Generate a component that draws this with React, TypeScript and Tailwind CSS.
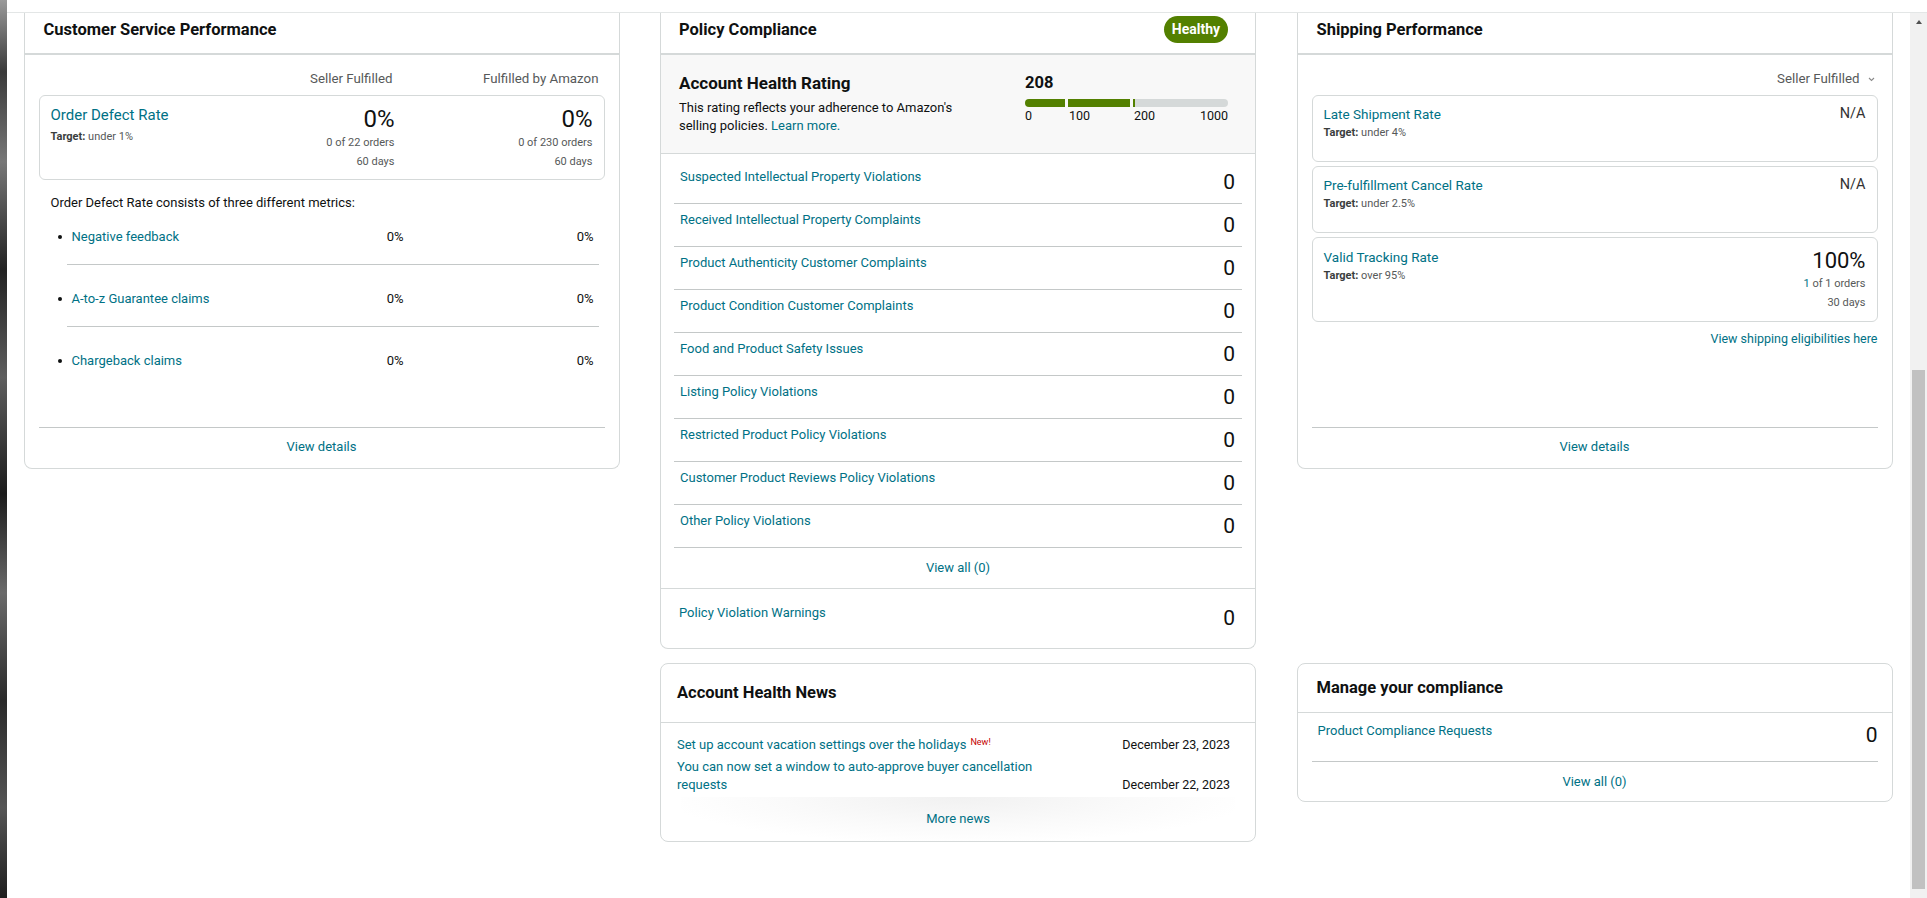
import React from "react";

const policyRows = [
  "Suspected Intellectual Property Violations",
  "Received Intellectual Property Complaints",
  "Product Authenticity Customer Complaints",
  "Product Condition Customer Complaints",
  "Food and Product Safety Issues",
  "Listing Policy Violations",
  "Restricted Product Policy Violations",
  "Customer Product Reviews Policy Violations",
  "Other Policy Violations",
];

const odrMetrics = [
  { label: "Negative feedback", row: "pb-[19px]" },
  { label: "A-to-z Guarantee claims", row: "pt-[26px] pb-[19px]" },
  { label: "Chargeback claims", row: "pt-[26px] pb-[58px]" },
];

function CardTitle({ children }: { children: React.ReactNode }) {
  return <h2 className="text-[16.5px] font-bold leading-[20px] text-[#0f1111]">{children}</h2>;
}

function CustomerServiceCard() {
  return (
    <section className="rounded-b-[8px] border-x border-b border-[#d5d9d9] bg-white">
      <div className="border-b-2 border-[#d5d9d9] pb-[13px] pl-[19px] pt-[7px]">
        <CardTitle>Customer Service Performance</CardTitle>
      </div>
      <div className="px-[14px]">
        <div className="flex pt-[16px] text-[13.3px] leading-[16px] text-[#565959]">
          <div className="flex-1" />
          <div className="text-right">Seller Fulfilled</div>
          <div className="w-[212px] pr-[6px] text-right">Fulfilled by Amazon</div>
        </div>

        <div className="mt-[8px] flex rounded-[6px] border border-[#d5d9d9] pb-[8px] pl-[11px] pr-[11px] pt-[9px]">
          <div className="flex-1 pt-[1px]">
            <a className="block text-[15px] leading-[18px] text-[#007185]">Order Defect Rate</a>
            <p className="mt-[5px] text-[11px] leading-[16px] text-[#565959]">
              <b className="font-bold text-[#3a3d3d]">Target:</b> under 1%
            </p>
          </div>
          <div className="text-right">
            <div className="text-[24px] leading-[28px] text-[#0f1111]">0%</div>
            <div className="text-[11px] leading-[19px] text-[#565959]">0 of 22 orders</div>
            <div className="text-[11px] leading-[19px] text-[#565959]">60 days</div>
          </div>
          <div className="w-[198px] text-right">
            <div className="text-[24px] leading-[28px] text-[#0f1111]">0%</div>
            <div className="text-[11px] leading-[19px] text-[#565959]">0 of 230 orders</div>
            <div className="text-[11px] leading-[19px] text-[#565959]">60 days</div>
          </div>
        </div>

        <p className="mt-[14px] pl-[12px] text-[13px] leading-[18px] text-[#0f1111]">
          Order Defect Rate consists of three different metrics:
        </p>

        <div className="mt-[17px]">
          {odrMetrics.map((m, i) => (
            <React.Fragment key={m.label}>
              {i > 0 && <div className="ml-[28px] mr-[6px] h-px bg-[#c4c8c8]" />}
              <div className={`flex items-center pl-[19px] pr-[11px] text-[13px] leading-[16px] ${m.row}`}>
                <span className="h-[4px] w-[4px] rounded-full bg-[#0f1111]" />
                <a className="ml-[10px] flex-1 text-[#007185]">{m.label}</a>
                <span className="text-[#0f1111]">0%</span>
                <span className="w-[190px] text-right text-[#0f1111]">0%</span>
              </div>
            </React.Fragment>
          ))}
        </div>

        <div className="h-px bg-[#c4c8c8]" />
        <div className="pb-[13px] pt-[11px] text-center text-[13px] leading-[16px] text-[#007185]">View details</div>
      </div>
    </section>
  );
}

function PolicyComplianceCard() {
  return (
    <section className="rounded-b-[8px] border-x border-b border-[#d5d9d9] bg-white">
      <div className="flex items-start justify-between border-b-2 border-[#d5d9d9] pl-[18px] pr-[27px]">
        <div className="pb-[13px] pt-[7px]">
          <CardTitle>Policy Compliance</CardTitle>
        </div>
        <span className="mt-[3px] flex h-[27px] w-[64px] items-center justify-center rounded-full bg-[#538000] text-[14px] font-bold text-white">
          Healthy
        </span>
      </div>

      <div className="flex border-b border-[#d5d9d9] bg-[#f8f8f8] pb-[18px] pl-[18px] pr-[27px] pt-[18px]">
        <div className="flex-1">
          <h3 className="text-[17px] font-bold leading-[20px] text-[#0f1111]">Account Health Rating</h3>
          <p className="mt-[6px] max-w-[292px] text-[13px] leading-[18px] text-[#0f1111]">
            This rating reflects your adherence to Amazon's selling policies.{" "}
            <a className="text-[#007185]">Learn more.</a>
          </p>
        </div>
        <div className="w-[203px]">
          <div className="text-[16.5px] font-bold leading-[20px] text-[#0f1111]">208</div>
          <div className="mt-[6px] flex h-[8px]">
            <div className="w-[40px] rounded-l-full bg-[#538000]" />
            <div className="ml-[3px] w-[62px] bg-[#538000]" />
            <div className="ml-[3px] w-[1.5px] bg-[#538000]" />
            <div className="flex-1 rounded-r-full bg-[#d5d9d9]" />
          </div>
          <div className="mt-[2px] flex text-[12.5px] leading-[14px] text-[#0f1111]">
            <span className="w-[44px]">0</span>
            <span className="w-[65px]">100</span>
            <span className="flex-1">200</span>
            <span>1000</span>
          </div>
        </div>
      </div>

      <div className="pt-[7px]">
        {policyRows.map((row) => (
          <div
            key={row}
            className="mx-[13px] flex h-[43px] items-start justify-between border-b border-[#c4c8c8] pl-[6px] pr-[7px] pt-[8px]"
          >
            <a className="text-[13px] leading-[16px] text-[#007185]">{row}</a>
            <span className="mt-[1px] text-[21px] leading-[24px] text-[#0f1111]">0</span>
          </div>
        ))}
      </div>
      <div className="flex h-[40px] items-center justify-center text-[13px] text-[#007185]">View all (0)</div>
      <div className="flex h-[60px] items-start justify-between border-t border-[#d5d9d9] pl-[18px] pr-[20px] pt-[16px]">
        <a className="text-[13px] leading-[16px] text-[#007185]">Policy Violation Warnings</a>
        <span className="mt-[1px] text-[21px] leading-[24px] text-[#0f1111]">0</span>
      </div>
    </section>
  );
}

function ShipBox({ title, target, value }: { title: string; target: string; value: string }) {
  return (
    <div className="flex h-[67px] justify-between rounded-[6px] border border-[#d5d9d9] px-[11px] pt-[9px]">
      <div>
        <a className="block text-[13.5px] leading-[18px] text-[#007185]">{title}</a>
        <p className="mt-[2px] text-[11px] leading-[16px] text-[#565959]">
          <b className="font-bold text-[#3a3d3d]">Target:</b> {target}
        </p>
      </div>
      <span className="text-[14.5px] leading-[18px] text-[#333]">{value}</span>
    </div>
  );
}

function ShippingCard() {
  return (
    <section className="rounded-b-[8px] border-x border-b border-[#d5d9d9] bg-white">
      <div className="border-b-2 border-[#d5d9d9] pb-[13px] pl-[19px] pt-[7px]">
        <CardTitle>Shipping Performance</CardTitle>
      </div>
      <div className="px-[14px]">
        <div className="flex items-center justify-end pr-[3px] pt-[16px] text-[13.3px] leading-[16px] text-[#565959]">
          Seller Fulfilled
          <svg className="ml-[8px] h-[5px] w-[7px]" viewBox="0 0 7 5" fill="none">
            <path d="M1 1l2.5 2.5L6 1" stroke="#8a8a8a" strokeWidth="1.1" />
          </svg>
        </div>
        <div className="mt-[8px] flex flex-col gap-[4px]">
          <ShipBox title="Late Shipment Rate" target="under 4%" value="N/A" />
          <ShipBox title="Pre-fulfillment Cancel Rate" target="under 2.5%" value="N/A" />
          <div className="flex h-[85px] justify-between rounded-[6px] border border-[#d5d9d9] px-[11px] pt-[10px]">
            <div>
              <a className="block text-[13.5px] leading-[18px] text-[#007185]">Valid Tracking Rate</a>
              <p className="mt-[2px] text-[11px] leading-[16px] text-[#565959]">
                <b className="font-bold text-[#3a3d3d]">Target:</b> over 95%
              </p>
            </div>
            <div className="text-right">
              <div className="text-[22px] leading-[26px] text-[#0f1111]">100%</div>
              <div className="text-[11px] leading-[19px] text-[#565959]">
                <a className="text-[#007185]">1</a> of 1 orders
              </div>
              <div className="text-[11px] leading-[19px] text-[#565959]">30 days</div>
            </div>
          </div>
        </div>
        <a className="mt-[8px] block text-right text-[12.5px] leading-[18px] text-[#007185]">
          View shipping eligibilities here
        </a>
        <div className="mt-[79px] h-px bg-[#c4c8c8]" />
        <div className="pb-[13px] pt-[11px] text-center text-[13px] leading-[16px] text-[#007185]">View details</div>
      </div>
    </section>
  );
}

function NewsCard() {
  return (
    <section className="rounded-[8px] border border-[#d5d9d9] bg-white">
      <div className="border-b border-[#d5d9d9] pb-[19px] pl-[16px] pt-[19px]">
        <CardTitle>Account Health News</CardTitle>
      </div>
      <div className="pl-[16px] pr-[25px] pt-[13px] text-[13px] leading-[18px]">
        <div className="flex justify-between">
          <a className="text-[#007185]">
            Set up account vacation settings over the holidays
            <sup className="ml-[4px] text-[9px] text-[#c40000]">New!</sup>
          </a>
          <span className="text-[12.5px] text-[#0f1111]">December 23, 2023</span>
        </div>
        <div className="mt-[4px] flex items-end justify-between">
          <a className="max-w-[372px] text-[#007185]">
            You can now set a window to auto-approve buyer cancellation requests
          </a>
          <span className="text-[12.5px] text-[#0f1111]">December 22, 2023</span>
        </div>
      </div>
      <div className="mx-[20px] mt-[3px] flex h-[44px] items-center justify-center bg-[radial-gradient(ellipse_at_top,#f1f1f1_0%,#fafafa_45%,#ffffff_75%)] text-[13px] text-[#007185]">
        More news
      </div>
    </section>
  );
}

function ManageComplianceCard() {
  return (
    <section className="rounded-[8px] border border-[#d5d9d9] bg-white">
      <div className="border-b border-[#d5d9d9] pb-[14px] pl-[19px] pt-[14px]">
        <CardTitle>Manage your compliance</CardTitle>
      </div>
      <div className="mx-[14px] flex h-[49px] items-start justify-between border-b border-[#c4c8c8] pl-[6px] pt-[10px]">
        <a className="text-[13px] leading-[16px] text-[#007185]">Product Compliance Requests</a>
        <span className="text-[21px] leading-[24px] text-[#0f1111]">0</span>
      </div>
      <div className="flex h-[39px] items-center justify-center text-[13px] text-[#007185]">View all (0)</div>
    </section>
  );
}

export default function App() {
  return (
    <div className="flex h-[898px] w-full overflow-hidden bg-white font-['Roboto',sans-serif]">
      <div className="w-[7px] shrink-0 bg-[linear-gradient(180deg,#9a9a9a_0%,#3a3a3a_8%,#777_18%,#222_30%,#5e5e5e_42%,#1c1c1c_55%,#6a6a6a_66%,#2a2a2a_78%,#555_90%,#1e1e1e_100%)]" />
      <div className="flex flex-1 flex-col">
        <div className="h-[13px] shrink-0 border-b border-[#e3e6e6]" />
        <div className="flex flex-1">
          <main className="flex-1 overflow-hidden pl-[16.5px]">
            <div className="grid grid-cols-[596px_596px_596px] items-start gap-x-[40.5px] gap-y-[14px]">
              <CustomerServiceCard />
              <PolicyComplianceCard />
              <ShippingCard />
              <div />
              <NewsCard />
              <ManageComplianceCard />
            </div>
          </main>
          <div className="flex w-[17px] shrink-0 flex-col bg-[#f1f1f1]">
            <div className="flex h-[17px] items-center justify-center">
              <span className="h-0 w-0 border-x-[3.5px] border-b-[4px] border-x-transparent border-b-[#505050]" />
            </div>
            <div className="flex-1" />
            <div className="mx-[2px] h-[519px] bg-[#c1c1c1]" />
            <div className="h-[9px]" />
          </div>
        </div>
      </div>
    </div>
  );
}
